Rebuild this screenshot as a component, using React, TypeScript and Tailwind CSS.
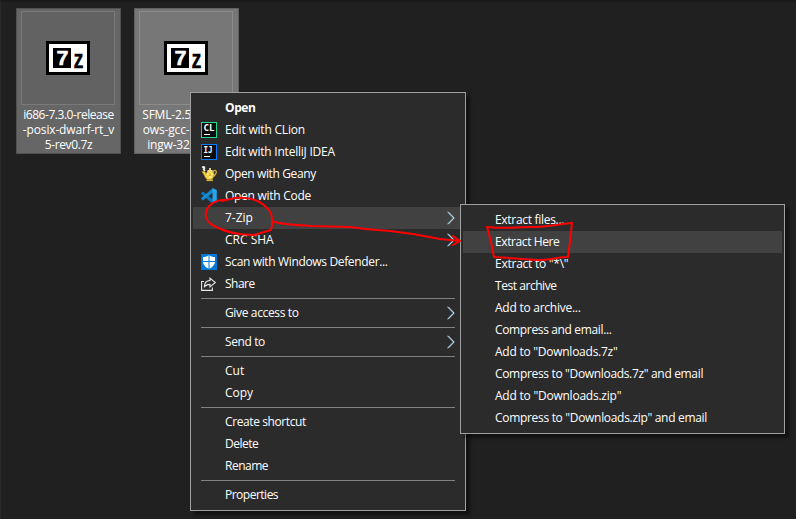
import type { ReactNode } from "react";

function JetBrainsIcon({ label, color, width }: { label: string; color: string; width: number }) {
  return (
    <svg width="16" height="16" viewBox="0 0 16 16">
      <rect x="0.5" y="0.5" width="15" height="15" fill="#0d0d0d" stroke={color} />
      <text x="2.6" y="9" textLength={width} lengthAdjust="spacingAndGlyphs" fill="#fff" fontFamily="DejaVu Sans Mono, monospace" fontWeight="700" fontSize="8">{label}</text>
      <rect x="3" y="12" width="6" height="1" fill="#fff" />
    </svg>
  );
}

function GeanyIcon() {
  return (
    <svg width="16" height="16" viewBox="0 0 16 16">
      <path d="M1 1.5 2.8.8 3.5 2l-.8 1.5L4 5" fill="none" stroke="#eee" strokeWidth="1.8" />
      <path d="M.8 5.5h3l1.5 2.7C5.8 5.7 7 4.5 9 4.3c2.3.2 3.8 1.5 4 4 .2 2.7-1.3 4.5-3 5.2H6.7C3.8 12.5 4 9 .8 5.5Z" fill="#f4d443" stroke="#c99a29" strokeWidth=".6" />
      <path d="M12 6c1.2-2.5 3.4-1.8 3.3.3-.2 2-1.8 3-2.6 4.2" fill="none" stroke="#deb03b" strokeWidth="1.3" />
      <path d="M6.5 4.8h5M9 2v2" stroke="#f6df87" strokeWidth="1.8" />
      <path d="M5.5 14.3h6.5" stroke="#d9ad3c" strokeWidth="1.6" />
      <path d="M5.7 8h1.8M10.5 8H12M8 11h2.5" stroke="#fff5ae" strokeWidth="1.5" />
      <path d="M8.5 8.5h1v1h-1z" fill="#ba4e25" />
    </svg>
  );
}

function CodeIcon() {
  return (
    <svg width="16" height="16" viewBox="0 0 16 16">
      <path d="m.2 5 1.7-1.6L12 11.4V16L.2 6Z" fill="#0877bd" />
      <path d="m.2 11 1.7 1.6L12 4.6V0L.2 10Z" fill="#178acb" />
      <path d="m11.5 0 4.3 2v12l-4.3 2V0Z" fill="#27a4ed" />
    </svg>
  );
}

function DefenderIcon() {
  return (
    <svg width="16" height="16" viewBox="0 0 16 16">
      <path d="M0 0h16v16H0z" fill="#0078d7" />
      <path d="M8 1C6.2 2.5 4.3 3 2 3v4.7c0 3.4 3.2 5.7 6 7.1 2.8-1.4 6-3.7 6-7.1V3c-2.3 0-4.2-.5-6-2Z" fill="#fff" />
      <path d="M8 1v14M2 7.5h12" stroke="#0078d7" />
    </svg>
  );
}

function ShareIcon() {
  return (
    <svg width="16" height="16" viewBox="0 0 16 16" fill="none" stroke="#e5e5e5" strokeWidth="1.1">
      <path d="M3 5.5H.6v8.9h10.8v-3" />
      <path d="M9 2.1 14.3 6.5 9 10.9V8.4c-3 0-4.6.9-5.7 2.9.1-4 1.8-6.6 5.7-6.9Z" />
    </svg>
  );
}

function Chevron() {
  return (
    <svg className="mr-2 h-[14px] w-2 shrink-0" viewBox="0 0 8 14" fill="none">
      <path d="m.4.8 6 6.2-6 6.2" stroke="#4c91bc" strokeWidth="1.1" />
      <path d="m1.2.8 6 6.2-6 6.2" stroke="#f3e6cc" strokeWidth="1" />
    </svg>
  );
}

type ItemProps = { children: ReactNode; icon?: ReactNode; arrow?: boolean; active?: boolean; bold?: boolean; spacing?: string };

function Item({ children, icon, arrow, active, bold, spacing = "" }: ItemProps) {
  return (
    <div className={`mx-[2px] flex h-[22px] items-center ${active ? "bg-[#414141]" : ""}`}>
      <span className="ml-2 flex w-6 shrink-0 items-center">{icon}</span>
      <span className={`grow whitespace-pre leading-[22px] ${bold ? "font-bold" : ""} ${spacing}`}>{children}</span>
      {arrow && <Chevron />}
    </div>
  );
}

function Separator() {
  return <div className="my-[3px] mr-[10px] ml-[10px] h-px bg-[#808080]" />;
}

type Line = { text: string; spacing: string };

function Archive({ lines, light }: { lines: Line[]; light?: boolean }) {
  return (
    <div className={`h-[146px] w-[105px] border pt-[2px] ${light ? "border-[#606060] bg-[#777777]" : "border-[#505050] bg-[#666666]"}`}>
      <div className={`ml-1 flex h-[94px] w-[94px] items-center justify-center border ${light ? "border-[#8b8b8b] bg-[#777777]" : "border-[#7a7a7a] bg-[#626262]"}`}>
        <svg width="44" height="34" viewBox="0 0 44 34" className="block">
          <path d="M0 0h44v34H0z" />
          <path d="M3 3h38v28H3z" fill="#fff" />
          <path d="M7 7h18v20H7z" />
          <text x="10.5" y="24" textLength="12" lengthAdjust="spacingAndGlyphs" fill="#fff" stroke="#fff" strokeWidth=".5" fontFamily="Liberation Sans, sans-serif" fontWeight="700" fontSize="20">7</text>
          <text x="27.5" y="27" textLength="10" lengthAdjust="spacingAndGlyphs" stroke="#000" strokeWidth=".3" fontFamily="Liberation Sans, sans-serif" fontWeight="700" fontSize="26">z</text>
        </svg>
      </div>
      <div className="mt-[2px] text-center leading-[15px] whitespace-nowrap">
        {lines.map((line) => <div key={line.text} className={line.spacing}>{line.text}</div>)}
      </div>
    </div>
  );
}

export default function App() {
  return (
    <main className="relative h-[519px] w-[796px] overflow-hidden border-t-2 border-l border-t-[#191919] border-l-[#292929] bg-[#202020] font-['Open_Sans','Noto_Sans',sans-serif] text-[12px] text-white">
      <div className="flex gap-[13px] pt-[6px] pl-[15px]">
        <Archive
          lines={[
            { text: "i686-7.3.0-release", spacing: "tracking-[-0.45px]" },
            { text: "-posix-dwarf-rt_v", spacing: "tracking-[-0.15px]" },
            { text: "5-rev0.7z", spacing: "tracking-[-0.4px]" },
          ]}
        />
        <Archive
          light
          lines={[
            { text: "SFML-2.5.1-wind", spacing: "tracking-[-0.2px]" },
            { text: "ows-gcc-7.3.0-m", spacing: "tracking-[-0.15px]" },
            { text: "ingw-32-bit.zip", spacing: "tracking-[-0.2px]" },
          ]}
        />
      </div>
      <div className="absolute top-[90px] left-[189px] h-[419px] w-[276px] border border-[#a0a0a0] bg-[#2b2b2b] py-1 shadow-[4px_4px_3px_rgba(0,0,0,0.45)]">
        <Item bold spacing="tracking-[-0.4px]">Open</Item>
        <Item spacing="tracking-[-0.2px]" icon={<JetBrainsIcon label="CL" color="#22d88f" width={11} />}>Edit with CLion</Item>
        <Item spacing="tracking-[-0.22px]" icon={<JetBrainsIcon label="IJ" color="#087cfa" width={9} />}>Edit with IntelliJ IDEA</Item>
        <Item spacing="tracking-[-0.38px]" icon={<GeanyIcon />}>Open with Geany</Item>
        <Item spacing="tracking-[-0.28px]" icon={<CodeIcon />}>Open with Code</Item>
        <Item arrow active>7-Zip</Item>
        <Item arrow>CRC SHA</Item>
        <Item spacing="tracking-[-0.35px]" icon={<DefenderIcon />}>Scan with Windows Defender...</Item>
        <Item spacing="tracking-[-0.5px]" icon={<ShareIcon />}>Share</Item>
        <Separator />
        <Item arrow spacing="tracking-[-0.35px]">Give access to</Item>
        <Separator />
        <Item arrow spacing="tracking-[-0.4px]">Send to</Item>
        <Separator />
        <Item>Cut</Item>
        <Item>Copy</Item>
        <Separator />
        <Item spacing="tracking-[-0.4px]">Create shortcut</Item>
        <Item spacing="tracking-[-0.5px]">Delete</Item>
        <Item spacing="tracking-[-0.5px]">Rename</Item>
        <Separator />
        <Item spacing="tracking-[-0.5px]">Properties</Item>
      </div>
      <div className="absolute top-[202px] left-[459px] h-[230px] w-[325px] border border-[#a0a0a0] bg-[#2b2b2b] py-1 shadow-[4px_4px_3px_rgba(0,0,0,0.45)]">
        <Item spacing="tracking-[-0.3px]">Extract files...</Item>
        <Item active spacing="tracking-[-0.4px]">Extract Here</Item>
        <Item spacing="tracking-[-0.25px]">{'Extract to "*\\"'}</Item>
        <Item spacing="tracking-[-0.45px]">Test archive</Item>
        <Item spacing="tracking-[-0.25px]">Add to archive...</Item>
        <Item spacing="tracking-[-0.35px]">Compress and email...</Item>
        <Item spacing="tracking-[-0.25px]">Add to "Downloads.7z"</Item>
        <Item spacing="tracking-[-0.33px]">Compress to "Downloads.7z" and email</Item>
        <Item spacing="tracking-[-0.23px]">Add to "Downloads.zip"</Item>
        <Item spacing="tracking-[-0.31px]">Compress to "Downloads.zip" and email</Item>
      </div>
      <svg className="absolute -top-[2px] -left-px" width="796" height="519" viewBox="0 0 796 519" fill="none" stroke="#ff0000" strokeWidth="2" strokeLinecap="round" strokeLinejoin="round">
        <path d="M227 200C217 199 208 204 206 212C204 220 210 224 216 227C226 232 239 235 254 235L271 230C273 223 273 213 267 208C259 199 246 197 235 198L222 201" />
        <path d="M274 222C283 224 295 225 311 226L350 227L365 229L390 231L413 234L440 239L460 241M453 236l7 5-7 4" />
        <path d="M487 227C501 229 517 227 532 227C546 227 560 224 572 223L570 242L568 257C558 257 550 260 538 260C523 259 508 258 494 257L491 242Z" />
      </svg>
    </main>
  );
}
